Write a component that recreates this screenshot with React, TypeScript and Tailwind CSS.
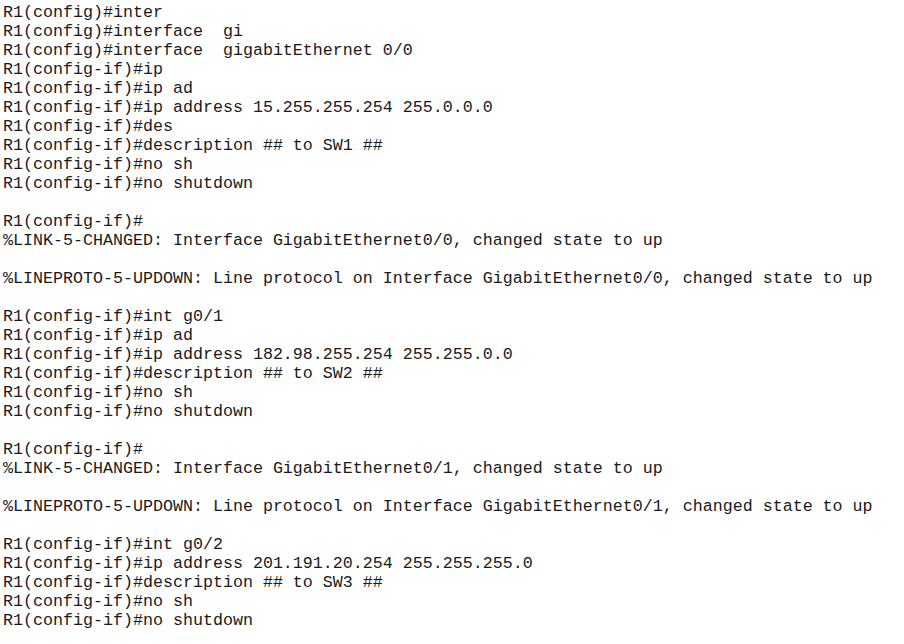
import React from "react";

const lines = [
  "R1(config)#inter",
  "R1(config)#interface  gi",
  "R1(config)#interface  gigabitEthernet 0/0",
  "R1(config-if)#ip",
  "R1(config-if)#ip ad",
  "R1(config-if)#ip address 15.255.255.254 255.0.0.0",
  "R1(config-if)#des",
  "R1(config-if)#description ## to SW1 ##",
  "R1(config-if)#no sh",
  "R1(config-if)#no shutdown",
  "",
  "R1(config-if)#",
  "%LINK-5-CHANGED: Interface GigabitEthernet0/0, changed state to up",
  "",
  "%LINEPROTO-5-UPDOWN: Line protocol on Interface GigabitEthernet0/0, changed state to up",
  "",
  "R1(config-if)#int g0/1",
  "R1(config-if)#ip ad",
  "R1(config-if)#ip address 182.98.255.254 255.255.0.0",
  "R1(config-if)#description ## to SW2 ##",
  "R1(config-if)#no sh",
  "R1(config-if)#no shutdown",
  "",
  "R1(config-if)#",
  "%LINK-5-CHANGED: Interface GigabitEthernet0/1, changed state to up",
  "",
  "%LINEPROTO-5-UPDOWN: Line protocol on Interface GigabitEthernet0/1, changed state to up",
  "",
  "R1(config-if)#int g0/2",
  "R1(config-if)#ip address 201.191.20.254 255.255.255.0",
  "R1(config-if)#description ## to SW3 ##",
  "R1(config-if)#no sh",
  "R1(config-if)#no shutdown",
];

export default function App() {
  return (
    <div className="w-[904px] h-[644px] bg-white overflow-hidden">
      <pre className="m-0 pl-[3px] pt-[3px] text-[16.67px] leading-[19px] text-[#1a1a1a] font-['Courier_New','Liberation_Mono',monospace] whitespace-pre">
        {lines.map((l, i) => (
          <div key={i} className="h-[19px]">
            {l}
          </div>
        ))}
      </pre>
    </div>
  );
}
